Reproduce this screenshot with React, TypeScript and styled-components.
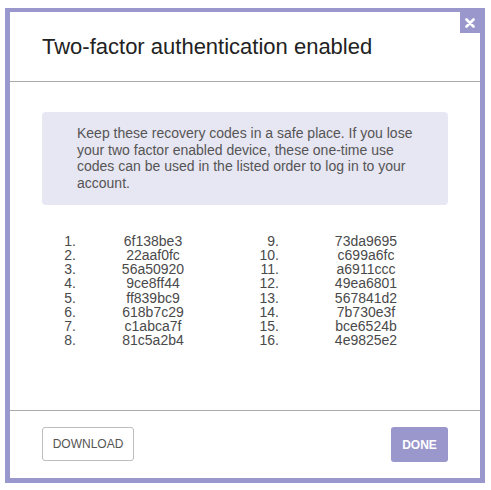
import React from 'react';
import styled, { createGlobalStyle } from 'styled-components';

const GlobalStyle = createGlobalStyle`
  body {
    margin: 0;
    background: #fff;
    font-family: "Liberation Sans", Arial, Helvetica, sans-serif;
  }
`;

const PURPLE = '#9a97cc';

const Page = styled.div`
  padding: 8px 0 0 5px;
`;

const Dialog = styled.div`
  position: relative;
  box-sizing: border-box;
  width: 480px;
  height: 475px;
  border: 5px solid ${PURPLE};
  border-top-width: 4px;
  background: #fff;
  display: flex;
  flex-direction: column;
`;

const CloseButton = styled.button`
  position: absolute;
  top: 0;
  right: 0;
  width: 20px;
  height: 21px;
  padding: 0;
  border: none;
  background: ${PURPLE};
  display: flex;
  align-items: center;
  justify-content: center;
  cursor: pointer;
`;

const Header = styled.div`
  height: 69px;
  padding-left: 32px;
  display: flex;
  align-items: center;
  border-bottom: 1px solid #ababab;
`;

const Title = styled.h1`
  margin: 0;
  font-size: 22px;
  font-weight: normal;
  color: #222;
`;

const Body = styled.div`
  flex: 1;
  padding: 30px 32px 0;
`;

const Notice = styled.div`
  background: #e7e6f3;
  border-radius: 4px;
  padding: 13px 32px 14px 35px;
  font-size: 14px;
  line-height: 16.5px;
  color: #555;
`;

const Codes = styled.div`
  margin-top: 29px;
  display: grid;
  grid-template-columns: 34px 154px 49px 1fr;
  grid-auto-rows: 14.15px;
  font-size: 14px;
  line-height: 14.15px;
  color: #4a4a4a;
`;

const Num = styled.div`
  text-align: right;
`;

const Code = styled.div<{ $shift?: boolean }>`
  text-align: center;
  padding-left: ${({ $shift }) => ($shift ? '5px' : '0')};
`;

const Footer = styled.div`
  border-top: 1px solid #ababab;
  padding: 16px 32px 0;
  height: 51px;
  display: flex;
  justify-content: space-between;
  align-items: flex-start;
`;

const DownloadButton = styled.button`
  box-sizing: border-box;
  width: 92px;
  height: 34px;
  background: #fff;
  border: 1px solid #bdbdbd;
  border-radius: 3px;
  font-family: inherit;
  font-size: 12px;
  color: #555;
  padding: 0;
  cursor: pointer;
`;

const DoneButton = styled.button`
  box-sizing: border-box;
  width: 57px;
  height: 35px;
  background: ${PURPLE};
  border: none;
  border-radius: 3px;
  font-family: inherit;
  font-size: 12px;
  font-weight: bold;
  color: #fff;
  padding: 0;
  cursor: pointer;
`;

const codes = [
  '6f138be3', '22aaf0fc', '56a50920', '9ce8ff44',
  'ff839bc9', '618b7c29', 'c1abca7f', '81c5a2b4',
  '73da9695', 'c699a6fc', 'a6911ccc', '49ea6801',
  '567841d2', '7b730e3f', 'bce6524b', '4e9825e2',
];

export default function App() {
  const rows = codes.slice(0, 8).map((c, i) => [
    { n: i + 1, code: c },
    { n: i + 9, code: codes[i + 8] },
  ]);

  return (
    <Page>
      <GlobalStyle />
      <Dialog>
        <CloseButton aria-label="Close">
          <svg width="10" height="10" viewBox="0 0 10 10">
            <path d="M1.5 1.5 L8.5 8.5 M8.5 1.5 L1.5 8.5" stroke="#fff" strokeWidth="2.6" strokeLinecap="round" />
          </svg>
        </CloseButton>
        <Header>
          <Title>Two-factor authentication enabled</Title>
        </Header>
        <Body>
          <Notice>
            Keep these recovery codes in a safe place. If you lose your two factor enabled device,
            these one-time use codes can be used in the listed order to log in to your account.
          </Notice>
          <Codes>
            {rows.map(([a, b]) => (
              <React.Fragment key={a.n}>
                <Num>{a.n}.</Num>
                <Code>{a.code}</Code>
                <Num>{b.n}.</Num>
                <Code $shift>{b.code}</Code>
              </React.Fragment>
            ))}
          </Codes>
        </Body>
        <Footer>
          <DownloadButton>DOWNLOAD</DownloadButton>
          <DoneButton>DONE</DoneButton>
        </Footer>
      </Dialog>
    </Page>
  );
}
